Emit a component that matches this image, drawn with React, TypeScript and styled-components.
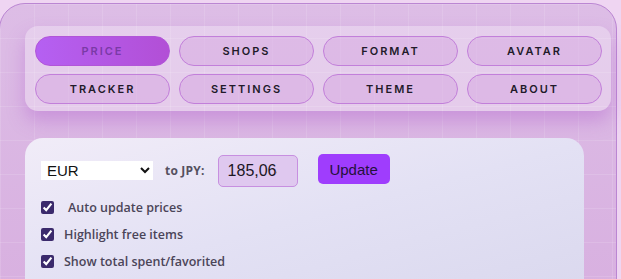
import { useState } from 'react'
import styled, { createGlobalStyle } from 'styled-components'

const GlobalStyle = createGlobalStyle`
  html, body {
    margin: 0;
    padding: 0;
    background: #efd5f2;
    overflow: hidden;
  }
  body {
    font-family: 'Open Sans', 'Liberation Sans', sans-serif;
  }
`

const TABS = ['Price', 'Shops', 'Format', 'Avatar', 'Tracker', 'Settings', 'Theme', 'About']

const OPTIONS = [
  { id: 'auto', label: 'Auto update prices', pad: true },
  { id: 'free', label: 'Highlight free items', pad: false },
  { id: 'total', label: 'Show total spent/favorited', pad: false },
]

const Page = styled.div`
  padding-top: 3px;
  height: 276px;
`

const Panel = styled.div`
  box-sizing: border-box;
  width: 618px;
  height: 290px;
  margin-left: -1px;
  padding: 22px 5px 0 25px;
  border: 1px solid #bb86d3;
  border-radius: 26px 26px 0 0;
  background-color: #dbb5e2;
  background-image: linear-gradient(rgba(255, 255, 255, 0.12) 1px, transparent 1px),
    linear-gradient(90deg, rgba(255, 255, 255, 0.12) 1px, transparent 1px),
    linear-gradient(180deg, #ddbde6 0%, #d8b0e0 100%);
  background-size: 34px 34px, 34px 34px, 100% 100%;
`

const Nav = styled.nav`
  display: grid;
  grid-template-columns: repeat(4, 135px);
  column-gap: 9px;
  row-gap: 8px;
  width: 586px;
  box-sizing: border-box;
  padding: 10px 10px 7px;
  border-radius: 13px;
  background: rgba(255, 255, 255, 0.28);
  box-shadow: 0 10px 18px rgba(170, 80, 200, 0.35);
`

const Tab = styled.button<{ $active?: boolean }>`
  height: 30px;
  box-sizing: border-box;
  border-radius: 15px;
  border: 1px solid ${(p) => (p.$active ? '#b155d8' : '#c27fda')};
  background: ${(p) =>
    p.$active
      ? 'linear-gradient(90deg, #b560f2 0%, #b24fd6 100%)'
      : 'rgba(205, 150, 222, 0.35)'};
  color: ${(p) => (p.$active ? '#7a3aa6' : '#221a2a')};
  font-family: Inter, 'Liberation Sans', sans-serif;
  font-size: 11px;
  font-weight: 600;
  letter-spacing: 2px;
  text-transform: uppercase;
  cursor: pointer;
  padding: 0;
`

const Card = styled.section`
  margin-top: 27px;
  width: 559px;
  height: 160px;
  box-sizing: border-box;
  padding: 16px;
  border-radius: 18px 18px 0 0;
  background: linear-gradient(165deg, #f1ecf8 0%, #e3e1f4 50%, #dad8ee 100%);
`

const Row = styled.div`
  display: flex;
  align-items: center;
  height: 33px;
`

const Select = styled.select`
  width: 112px;
  height: 19px;
  border: none;
  background: #fff;
  font-family: 'Liberation Sans', Arial, sans-serif;
  font-size: 15px;
  color: #111;
  padding: 0 0 0 2px;
  margin-right: 12px;
`

const RateLabel = styled.span`
  font-size: 12px;
  font-weight: 700;
  color: #55505f;
  margin-right: 13px;
  letter-spacing: 0.2px;
`

const RateInput = styled.input`
  width: 80px;
  height: 32px;
  box-sizing: border-box;
  border: 1px solid #c78fe0;
  border-radius: 5px;
  background: #dfc8ef;
  padding: 0 20px 0 9px;
  font-family: 'Liberation Sans', Arial, sans-serif;
  font-size: 16px;
  color: #1c1624;
  margin-right: 20px;
  align-self: flex-end;
`

const UpdateButton = styled.button`
  width: 72px;
  height: 30px;
  border: none;
  border-radius: 5px;
  background: #9f3dfd;
  color: #24123a;
  font-family: 'Liberation Sans', Arial, sans-serif;
  font-size: 15px;
  cursor: pointer;
  align-self: flex-start;
`

const Options = styled.div`
  display: flex;
  flex-direction: column;
  gap: 7px;
  margin-top: 10px;
`

const Option = styled.label<{ $pad?: boolean }>`
  display: flex;
  align-items: center;
  height: 20px;
  font-size: 12.5px;
  font-weight: 600;
  color: #4b4559;

  input {
    width: 13px;
    height: 13px;
    margin: 0 10px 0 0;
    accent-color: #3b2a6c;
  }

  span {
    padding-left: ${(p) => (p.$pad ? '4px' : '0')};
  }
`

export default function App() {
  const [active, setActive] = useState('Price')
  const [checked, setChecked] = useState<Record<string, boolean>>({
    auto: true,
    free: true,
    total: true,
  })

  return (
    <Page>
      <GlobalStyle />
      <Panel>
        <Nav>
          {TABS.map((t) => (
            <Tab key={t} $active={t === active} onClick={() => setActive(t)}>
              {t}
            </Tab>
          ))}
        </Nav>
        <Card>
          <Row>
            <Select defaultValue="EUR">
              <option>EUR</option>
              <option>USD</option>
              <option>GBP</option>
            </Select>
            <RateLabel>to JPY:</RateLabel>
            <RateInput defaultValue="185,0645" />
            <UpdateButton>Update</UpdateButton>
          </Row>
          <Options>
            {OPTIONS.map((o) => (
              <Option key={o.id} $pad={o.pad}>
                <input
                  type="checkbox"
                  checked={checked[o.id]}
                  onChange={() => setChecked({ ...checked, [o.id]: !checked[o.id] })}
                />
                <span>{o.label}</span>
              </Option>
            ))}
          </Options>
        </Card>
      </Panel>
    </Page>
  )
}
